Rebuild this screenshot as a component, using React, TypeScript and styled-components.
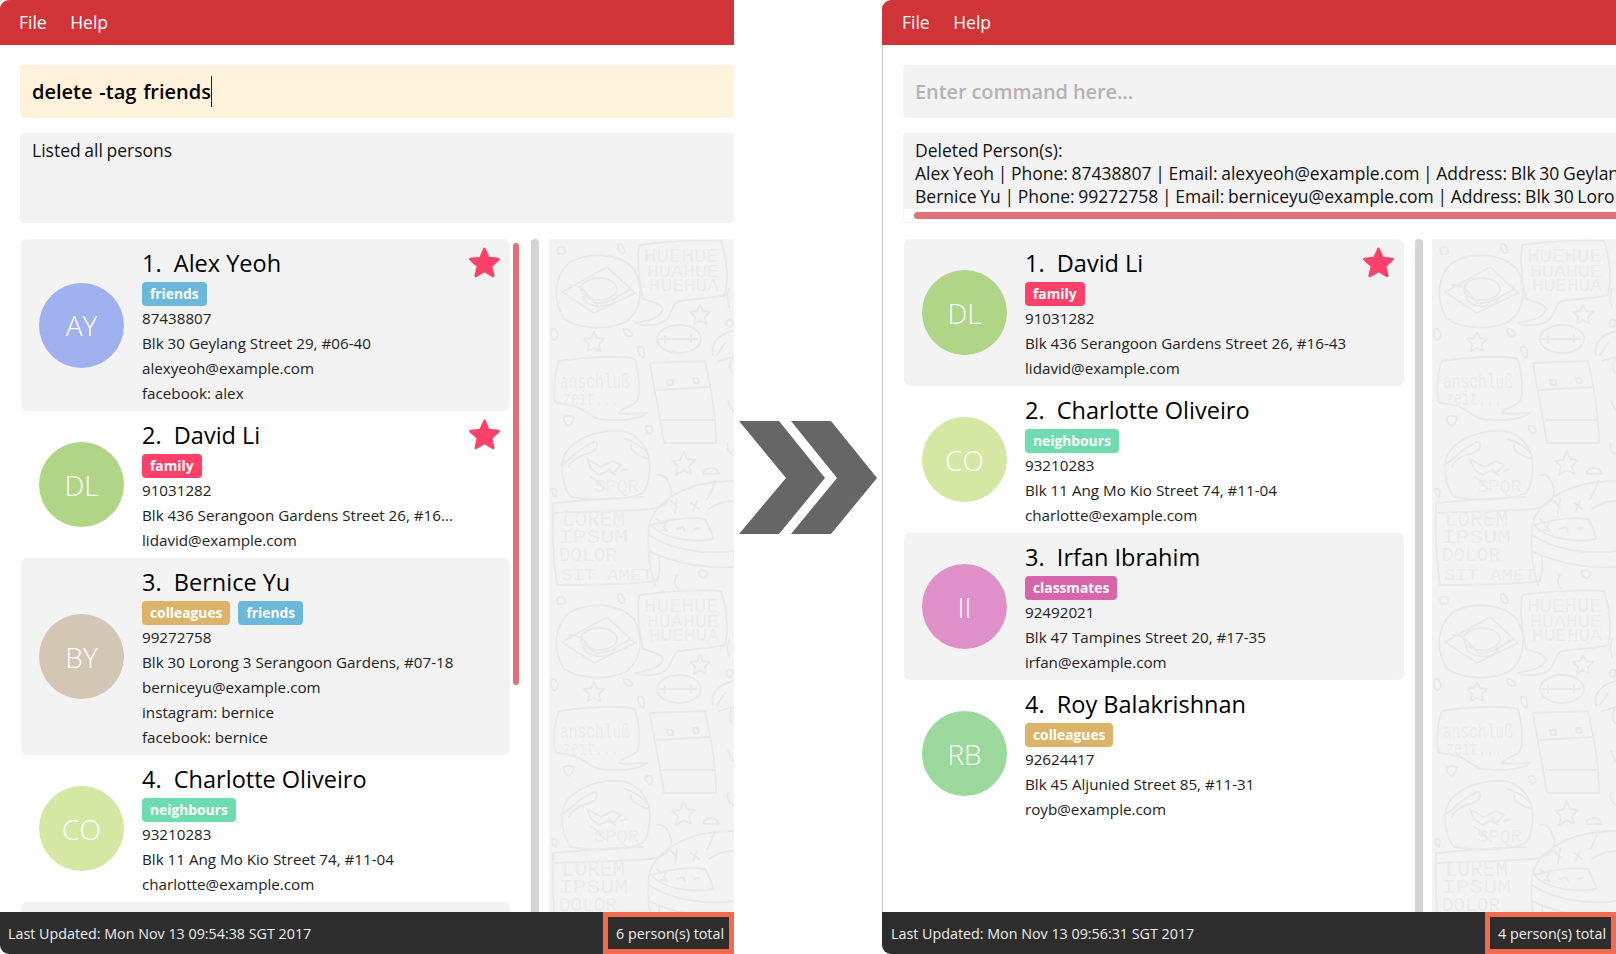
import React from 'react';
import styled, { createGlobalStyle } from 'styled-components';

const GlobalStyle = createGlobalStyle`
  html, body {
    margin: 0;
    padding: 0;
    background: #fff;
  }
  body {
    font-family: "Open Sans", "Noto Sans", sans-serif;
    color: #111;
  }
`;

interface Person {
  name: string;
  initials: string;
  color: string;
  tags: string[];
  starred?: boolean;
  lines: string[];
}

const TAG_COLORS: Record<string, string> = {
  friends: '#6cb8db',
  family: '#ff4068',
  colleagues: '#dbb46a',
  neighbours: '#6fdcb0',
  classmates: '#d765ac',
};

const before: Person[] = [
  {
    name: 'Alex Yeoh',
    initials: 'AY',
    color: '#a0b1f0',
    tags: ['friends'],
    starred: true,
    lines: ['87438807', 'Blk 30 Geylang Street 29, #06-40', 'alexyeoh@example.com', 'facebook: alex'],
  },
  {
    name: 'David Li',
    initials: 'DL',
    color: '#b0d587',
    tags: ['family'],
    starred: true,
    lines: ['91031282', 'Blk 436 Serangoon Gardens Street 26, #16...', 'lidavid@example.com'],
  },
  {
    name: 'Bernice Yu',
    initials: 'BY',
    color: '#d4c6b4',
    tags: ['colleagues', 'friends'],
    lines: [
      '99272758',
      'Blk 30 Lorong 3 Serangoon Gardens, #07-18',
      'berniceyu@example.com',
      'instagram: bernice',
      'facebook: bernice',
    ],
  },
  {
    name: 'Charlotte Oliveiro',
    initials: 'CO',
    color: '#d4e8a4',
    tags: ['neighbours'],
    lines: ['93210283', 'Blk 11 Ang Mo Kio Street 74, #11-04', 'charlotte@example.com'],
  },
];

const after: Person[] = [
  { ...before[1], lines: ['91031282', 'Blk 436 Serangoon Gardens Street 26, #16-43', 'lidavid@example.com'] },
  before[3],
  {
    name: 'Irfan Ibrahim',
    initials: 'II',
    color: '#e090c8',
    tags: ['classmates'],
    lines: ['92492021', 'Blk 47 Tampines Street 20, #17-35', 'irfan@example.com'],
  },
  {
    name: 'Roy Balakrishnan',
    initials: 'RB',
    color: '#9bd89b',
    tags: ['colleagues'],
    lines: ['92624417', 'Blk 45 Aljunied Street 85, #11-31', 'royb@example.com'],
  },
];

const Page = styled.div`
  display: flex;
  width: 1616px;
  height: 954px;
  overflow: hidden;
`;

const Pane = styled.div`
  display: flex;
  flex-direction: column;
  flex: 0 0 734px;
  width: 734px;
  height: 954px;
  overflow: hidden;
`;

const Between = styled.div`
  flex: 0 0 148px;
  display: flex;
  align-items: center;
  justify-content: center;
`;

const MenuBar = styled.div<{ $inset: number }>`
  flex: 0 0 45px;
  box-sizing: border-box;
  display: flex;
  align-items: center;
  gap: 23.5px;
  padding: 0 0 2px ${props => props.$inset}px;
  background: #d13438;
  border-top-left-radius: 9px;
  color: #fff;
  font-size: 17.5px;
`;

const Content = styled.div<{ $inset: number; $ruled: boolean }>`
  flex: 1;
  min-height: 0;
  display: flex;
  flex-direction: column;
  padding-left: ${props => props.$inset}px;
  border-left: ${props => (props.$ruled ? '1px solid #cacaca' : 'none')};
`;

const CommandBox = styled.div<{ $active: boolean }>`
  flex: 0 0 53px;
  display: flex;
  align-items: center;
  margin: 20px -10px 15px 0;
  padding-left: 12px;
  border-radius: 4px;
  background: ${props => (props.$active ? '#fff3dc' : '#f3f3f3')};
  color: ${props => (props.$active ? '#000' : '#b4b4b4')};
  font-size: 20px;
  font-weight: 600;
  word-spacing: ${props => (props.$active ? '1.6px' : '0')};
  letter-spacing: ${props => (props.$active ? '0' : '-0.1px')};
`;

const Caret = styled.span`
  display: inline-block;
  width: 1px;
  height: 31px;
  background: #222;
`;

const ResultBox = styled.div`
  flex: 0 0 90px;
  display: flex;
  flex-direction: column;
  margin-right: -10px;
  border-radius: 4px;
  overflow: hidden;
  background: #f3f3f3;
`;

const ResultText = styled.div`
  flex: 1;
  padding: 6px 0 0 12px;
  font-size: 17.5px;
  line-height: 23px;
  word-spacing: -0.9px;
  white-space: nowrap;
  overflow: hidden;
`;

const HorizontalTrack = styled.div`
  flex: 0 0 13px;
  padding: 3px 0 3px 10px;
  background: #fff;
  border: 1px solid #f3f3f3;
  border-top: none;
  box-sizing: border-box;
`;

const HorizontalThumb = styled.div`
  height: 7px;
  border-radius: 4px 0 0 4px;
  background: #e17176;
`;

const Body = styled.div`
  flex: 1;
  min-height: 0;
  display: flex;
  margin-top: 16px;
  overflow: hidden;
`;

const CardList = styled.div<{ $width: number; $leftShift: number }>`
  flex: 0 0 ${props => props.$width}px;
  margin-left: ${props => props.$leftShift}px;
  overflow: hidden;
`;

const Card = styled.div<{ $shaded: boolean }>`
  display: flex;
  align-items: center;
  gap: 18px;
  padding: 6px 9px 5px 18px;
  border-radius: 6px;
  background: ${props => (props.$shaded ? '#f3f3f3' : 'transparent')};
`;

// top of the next card, the rest of it is scrolled out of view
const NextCardEdge = styled.div`
  height: 40px;
  border-radius: 6px;
  background: #f3f3f3;
`;

const Avatar = styled.div<{ $color: string }>`
  flex: 0 0 85px;
  height: 85px;
  margin-bottom: 1px;
  display: flex;
  align-items: center;
  justify-content: center;
  border-radius: 50%;
  background: ${props => props.$color};
  color: #fff;
  font-size: 28px;
  font-weight: 300;
`;

const CardBody = styled.div`
  flex: 1;
  min-width: 0;
`;

const NameRow = styled.div`
  display: flex;
  align-items: center;
  justify-content: space-between;
  height: 36px;
`;

const Name = styled.div`
  font-size: 23.5px;
  line-height: 36px;
  color: #000;
  white-space: pre;
`;

const StarIcon = styled.svg`
  flex: 0 0 33px;
  width: 33px;
  height: 33px;
  margin-top: -1px;
  fill: #ff4068;
  stroke: #ff4068;
  stroke-width: 2;
  stroke-linejoin: round;
`;

const TagRow = styled.div`
  display: flex;
  gap: 8px;
  height: 24px;
  margin-top: 1px;
`;

const Tag = styled.span<{ $color: string }>`
  display: flex;
  align-items: center;
  box-sizing: border-box;
  height: 24px;
  padding: 0 8px 1px;
  border-radius: 4px;
  background: ${props => props.$color};
  color: #fff;
  font-size: 13.8px;
  font-weight: 700;
`;

const Detail = styled.div`
  font-size: 15.2px;
  line-height: 25px;
  color: #222;
  white-space: nowrap;
`;

const ThumbColumn = styled.div`
  flex: 0 0 6px;
  margin-left: 3px;
`;

const Thumb = styled.div<{ $height: number }>`
  height: ${props => props.$height}px;
  margin-top: 4px;
  border-radius: 3px;
  background: #e17176;
`;

const ScrollTrack = styled.div<{ $gap: number }>`
  flex: 0 0 8px;
  margin-left: ${props => props.$gap}px;
  border-radius: 4px 4px 0 0;
  background: #d4d4d4;
`;

const TexturePanel = styled.div<{ $gap: number }>`
  flex: 1;
  min-width: 0;
  margin-left: ${props => props.$gap}px;
  background: #f3f3f3;
  overflow: hidden;

  svg {
    display: block;
    width: 100%;
    height: 100%;
  }
`;

const StatusBar = styled.div<{ $inset: number }>`
  flex: 0 0 42px;
  display: flex;
  align-items: stretch;
  justify-content: space-between;
  padding-left: ${props => props.$inset}px;
  border-bottom-left-radius: 9px;
  background: #2d2d2d;
  color: #eee;
  font-size: 14.3px;
`;

const StatusText = styled.div`
  display: flex;
  align-items: center;
`;

const TotalBox = styled.div`
  display: flex;
  align-items: center;
  box-sizing: border-box;
  width: 131px;
  padding-left: 8px;
  border: 5px solid #f26b4f;
  white-space: nowrap;
`;

const DoodleText = styled.text<{ $size: number }>`
  font-family: "Liberation Mono", monospace;
  font-size: ${props => props.$size}px;
  fill: #ebebeb;
  stroke: none;
`;

const Doodles = ({ id }: { id: string }) => (
  <svg aria-hidden="true">
    <defs>
      <pattern id={id} width="400" height="350" patternUnits="userSpaceOnUse">
        <g fill="none" stroke="#e9e9e9" strokeWidth="1.9" strokeLinejoin="round" strokeLinecap="round">
          {/* burger bubble */}
          <path d="M8 10c3-4 7-3 8 1s-1 4-7 4z" />
          <path d="M69 5c3-2 6 3 7 8-3 3-8 0-7-8z" />
          <path d="M20 24C40 12 70 14 85 30c10 18 8 40-7 52-18 10-48 8-63-2C4 62 4 38 20 24z" />
          <path d="M13 53 58 28 86 54 45 74z" />
          <ellipse cx="50" cy="50" rx="18" ry="11" />
          <path d="M20 46c14-2 20 14 26 18 14 2 30-12 36-14" />
          <path d="M34 58c2 10 26 14 32 2" />
          {/* HUEHUE speech bubble */}
          <path d="M90 6c20-3 60-6 82-4 6 18 8 40 4 54-16 4-36 4-46 6-8 2-6 18-18 22-12 4-22 2-26 0 10-2 26-4 28-14-2-6-14-8-20-10-4-18-6-38-4-54z" />
          <path d="M151 66l3 6 7 1-5 5 1 7-6-4-6 4 1-7-5-5 7-1z" />
          <ellipse cx="130" cy="100" rx="22" ry="14" />
          <path d="M110 100h38M116 97v7M142 96v7" />
          <path d="M45 93l3 6 7 1-5 5 1 7-6-3-6 3 1-7-5-5 7-1z" />
          <path d="M3 90c3-1 5 2 6 6-1 4-3 6-5 5-2-3-3-8-1-11zM75 90c4-1 7 2 9 6-3 2-9 2-9-6zM89 108c3-1 6 0 6 3v8c-3 0-7-6-6-11z" />
          <path d="M170 98c6-4 14-6 14-6M164 116c-2-8 2-16 10-20M170 122l14-4M176 104l-8 12" />
          <path d="M180 50c-2 6-2 12 0 18M178 82c2-2 6-2 6 2l-2 4c-4 0-6-2-4-6z" />
          {/* anschluss bubble */}
          <path d="M10 122c24-4 60-6 76-2 4 16 6 32 2 42-4 6-16 6-18 12 6 2 20 0 28 0-10 8-32 8-48 6-10-2-18-14-30-14-4-2-12 0-14-4-2-14 0-30 4-40z" />
          <path d="M101 124l55-2c6 26 11 54 11 82h-52c-4-26-10-54-14-80zM108 151l52-3M114 181h52" />
          <path d="M118 141h6v5h-5zM144 139h5l1 5h-5z" />
          <path d="M15 178c4-2 9-1 10 1-1 5-4 8-6 8-3-2-5-6-4-9zM97 187h5l2 5-3 3c-3-1-5-4-4-8zM183 120c-3 4-3 10 0 14M179 162c2 4 3 8 5 10M179 204c-2 4 1 10 5 12" />
          {/* sushi bowl */}
          <path d="M14 220c4-16 30-30 58-28 14 2 24 12 28 26 2 14 0 28-6 36-18 8-50 8-72 4-8-10-10-24-8-38z" />
          <path d="M12 226c8-4 16-14 24-18 6-4 12-8 12-2s-6 8-14 10c-6 2-14 8-14 12M76 200c8 2 18 8 24 16M82 206c-2 6 10 12 18 14M38 220l14 8 12-6 8 4-8 8-6-2-8 4-8-6zM42 238c6 2 10 8 14 12M60 230l6 6M72 232l6-2" />
          <path d="M135 212l3 8 8 1-6 6 2 8-7-4-8 5 2-9-6-5 8-1z" />
          <path d="M155 232c2-3 10-4 13-1l2 4h-15zM3 250c2-1 4 0 5 2l-1 6c-2 0-5-4-4-8z" />
          <path d="M108 236c8-2 12 6 14 14 2 10-6 18-20 20-20 2-60 2-96 4" />
          {/* cake */}
          <path d="M100 288c2-20 30-46 84-46M100 288c-2 20 0 40 6 58M100 296c20 14 54 20 84 16M100 312c24 12 58 18 84 16M158 260c4-6 6-12 8-18" />
          <path d="M102 286c20-6 40-8 54-6 4 8 8 14 8 20-20 4-50 0-62-14zM160 270c8-6 16-8 24-8" />
          <path d="M108 280l4 4 6-2-3 6 3 4-6-1M122 262l6 6M128 260l-2 14M142 264l8 6M148 262l-4 10M128 290l6-2 2 4M146 290l4-1" />
          {/* lorem board */}
          <path d="M4 264c30-2 60-6 90-6M4 264c-1 28 0 56 4 82 30 0 70 0 100-4 4-12 2-20 2-26" />
          <path d="M128 336c-4 6-2 12 2 14M150 332c4-2 8 0 9 3l-3 4c-4 0-7-3-6-7z" />
          <DoodleText $size={22} x="13" y="287" textLength="63" lengthAdjust="spacingAndGlyphs">LOREM</DoodleText>
          <DoodleText $size={20} x="10" y="304" textLength="69" lengthAdjust="spacingAndGlyphs">IPSUM</DoodleText>
          <DoodleText $size={20} x="10" y="322" textLength="58" lengthAdjust="spacingAndGlyphs">DOLOR</DoodleText>
          <DoodleText $size={17} x="12" y="341" textLength="92" lengthAdjust="spacingAndGlyphs">SIT AMET</DoodleText>
          <DoodleText $size={20} x="95" y="23" textLength="75" lengthAdjust="spacingAndGlyphs">HUEHUE</DoodleText>
          <DoodleText $size={19} x="98" y="38" textLength="72" lengthAdjust="spacingAndGlyphs">HUAHUE</DoodleText>
          <DoodleText $size={18} x="100" y="52" textLength="70" lengthAdjust="spacingAndGlyphs">HUEHUA</DoodleText>
          <DoodleText $size={21} x="11" y="149" textLength="70" lengthAdjust="spacingAndGlyphs">anschluß</DoodleText>
          <DoodleText $size={20} x="14" y="166" textLength="56" lengthAdjust="spacingAndGlyphs">zeit...</DoodleText>
          <DoodleText $size={18} x="45" y="253" textLength="45" lengthAdjust="spacingAndGlyphs">SPQR</DoodleText>
        </g>
      </pattern>
    </defs>
    <rect width="100%" height="100%" fill={`url(#${id})`} />
  </svg>
);

const Star = () => (
  <StarIcon viewBox="0 0 24 24">
    <polygon points="12,2.2 14.9,8.9 22.2,9.6 16.7,14.5 18.3,21.7 12,18 5.7,21.7 7.3,14.5 1.8,9.6 9.1,8.9" />
  </StarIcon>
);

const PersonCard = ({ person, index }: { person: Person; index: number }) => (
  <Card $shaded={index % 2 === 0}>
    <Avatar $color={person.color}>{person.initials}</Avatar>
    <CardBody>
      <NameRow>
        <Name>{`${index + 1}.  ${person.name}`}</Name>
        {person.starred && <Star />}
      </NameRow>
      <TagRow>
        {person.tags.map(tag => (
          <Tag key={tag} $color={TAG_COLORS[tag]}>
            {tag}
          </Tag>
        ))}
      </TagRow>
      {person.lines.map(line => (
        <Detail key={line}>{line}</Detail>
      ))}
    </CardBody>
  </Card>
);

const Chevrons = () => (
  <svg width="138" height="113" viewBox="0 0 138 113" fill="#666">
    <polygon points="0,0 40,0 86,57 40,113 0,113 47,57" />
    <polygon points="52,0 92,0 138,57 92,113 52,113 98,57" />
  </svg>
);

export default function App() {
  return (
    <Page>
      <GlobalStyle />
      <Pane>
        <MenuBar $inset={19}>
          <span>File</span>
          <span>Help</span>
        </MenuBar>
        <Content $inset={20} $ruled={false}>
          <CommandBox $active>
            delete -tag friends
            <Caret />
          </CommandBox>
          <ResultBox>
            <ResultText>Listed all persons</ResultText>
          </ResultBox>
          <Body>
            <CardList $width={489} $leftShift={1}>
              {before.map((person, index) => (
                <PersonCard key={person.name} person={person} index={index} />
              ))}
              <NextCardEdge />
            </CardList>
            <ThumbColumn>
              <Thumb $height={442} />
            </ThumbColumn>
            <ScrollTrack $gap={12} />
            <TexturePanel $gap={10}>
              <Doodles id="doodles-left" />
            </TexturePanel>
          </Body>
        </Content>
        <StatusBar $inset={8}>
          <StatusText>Last Updated: Mon Nov 13 09:54:38 SGT 2017</StatusText>
          <TotalBox>6 person(s) total</TotalBox>
        </StatusBar>
      </Pane>
      <Between>
        <Chevrons />
      </Between>
      <Pane>
        <MenuBar $inset={20}>
          <span>File</span>
          <span>Help</span>
        </MenuBar>
        <Content $inset={20} $ruled>
          <CommandBox $active={false}>Enter command here...</CommandBox>
          <ResultBox>
            <ResultText>
              Deleted Person(s):
              <br />
              Alex Yeoh | Phone: 87438807 | Email: alexyeoh@example.com | Address: Blk 30 Geylang Street 29, #06-40
              <br />
              Bernice Yu | Phone: 99272758 | Email: berniceyu@example.com | Address: Blk 30 Lorong 3 Serangoon Gardens
            </ResultText>
            <HorizontalTrack>
              <HorizontalThumb />
            </HorizontalTrack>
          </ResultBox>
          <Body>
            <CardList $width={500} $leftShift={1}>
              {after.map((person, index) => (
                <PersonCard key={person.name} person={person} index={index} />
              ))}
            </CardList>
            <ScrollTrack $gap={11} />
            <TexturePanel $gap={9}>
              <Doodles id="doodles-right" />
            </TexturePanel>
          </Body>
        </Content>
        <StatusBar $inset={9}>
          <StatusText>Last Updated: Mon Nov 13 09:56:31 SGT 2017</StatusText>
          <TotalBox>4 person(s) total</TotalBox>
        </StatusBar>
      </Pane>
    </Page>
  );
}
